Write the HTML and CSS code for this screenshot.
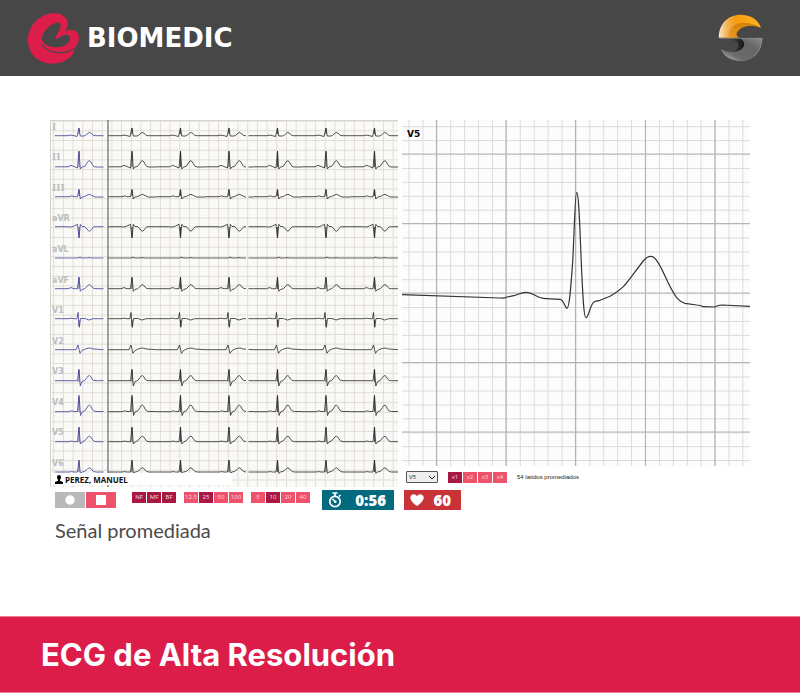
FILE: index.html
```html
<!DOCTYPE html>
<html lang="es">
<head>
<meta charset="utf-8">
<meta name="viewport" content="width=device-width, initial-scale=1">
<title>Biomedic</title>
<link rel="stylesheet" href="styles.css">
</head>
<body>
<header class="header">
  <div class="brand">
    <svg class="brand-mark" viewBox="84 38 152 152" aria-hidden="true">
      <path fill="#dd1e4b" fill-rule="evenodd" d="M160 39C182 36 203 52 203 70C203 79 199 86 193 94C206 86 228 86 234 102C239 115 233 130 224 143C221 168 193 189 157 189C114 189 84 160 84 120C84 75 117 42 160 39ZM168 67C145 74 122 100 126 118C130 132 145 139 165 140C184 141 204 134 209 118C212 108 206 101 196 103C185 105 174 114 165 117C167 105 176 95 180 82C184 72 178 64 168 67Z"/>
      <path fill="none" stroke="#474747" stroke-width="3.500" d="M125 132C146 161 196 164 227 141"/>
    </svg>
    <span class="brand-name">BIOMEDIC</span>
  </div>
  <svg class="partner-mark" viewBox="52 40 136 146" aria-hidden="true">
    <defs>
      <linearGradient id="gold" x1="0" y1="0" x2="1" y2="0">
        <stop offset="0" stop-color="#fbe6c8"/><stop offset=".2" stop-color="#f3b157"/>
        <stop offset=".4" stop-color="#f59c10"/><stop offset="1" stop-color="#ffb31f"/>
      </linearGradient>
      <linearGradient id="goldShade" x1="0" y1="1" x2="1" y2="0">
        <stop offset="0" stop-color="#e99214"/><stop offset="1" stop-color="#945000"/>
      </linearGradient>
      <linearGradient id="steel" x1="0" y1="1" x2="1" y2="0">
        <stop offset="0" stop-color="#d0d0d0"/><stop offset=".3" stop-color="#6a6a6a"/>
        <stop offset=".7" stop-color="#666"/><stop offset="1" stop-color="#8c8c8c"/>
      </linearGradient>
      <linearGradient id="steelShade" x1="0" y1="0" x2="1" y2="0">
        <stop offset="0" stop-color="#555"/><stop offset="1" stop-color="#161616"/>
      </linearGradient>
    </defs>
    <path fill="url(#gold)" d="M54 112C54 70 82 42 120 42C151 42 175 58 182 82C158 72 131 74 117 87C105 97 104 106 116 112Z"/>
    <path fill="url(#goldShade)" d="M84 112C78 82 108 60 146 68Q168 72 182 82C158 72 131 74 117 87C105 97 104 106 116 112Z" opacity=".5"/>
    <path fill="url(#steel)" d="M116 114H186C185 155 160 184 124 184C92 184 67 168 60 146C84 160 111 158 125 145C136 134 132 121 116 114Z"/>
    <path fill="url(#steelShade)" d="M76 114H116C132 121 136 134 125 145C119 151 108 155 98 155C119 145 121 125 96 120Q86 118 76 114Z"/>
    <path fill="none" stroke="#a8a8a8" stroke-width="1.500" d="M56 114H186C184 138 176 156 162 168"/>
  </svg>
</header>

<main class="content">
  <section class="monitor" aria-label="Registro de ECG">
    <div class="strip">
      <svg class="chart" viewBox="0 0 348 367" role="img" aria-label="Doce derivaciones">
        <defs>
          <pattern id="fine" width="1.94" height="1.94" patternUnits="userSpaceOnUse">
            <path d="M0 0H2M0 0V2" stroke="#f3f2ef" stroke-width=".8"/>
          </pattern>
          <pattern id="paper" x="3.2" y="0.6" width="9.7" height="9.7" patternUnits="userSpaceOnUse">
            <path d="M0 .5H9.7M.5 0V9.7" stroke="#ded7cc" stroke-width=".8"/>
          </pattern>
          <clipPath id="sweep"><path d="M58 0H196V367H58ZM198.500 0H348V367H198.500Z"/></clipPath>
          <!-- One heartbeat for all leads, centred on the R wave -->
          <g id="beat" fill="none" stroke-linejoin="round" stroke-width=".8">
            <path d="M-24 15.700H-11Q-8 14.500 -5 15.700L-2 16.500 0 8 1.200 16H5Q7 15.500 8 14Q10 11 12.500 13.500Q14 16 16 15.700H24.500"/>
            <path d="M-24 46.800H-11Q-8 44 -5 46.500L-1.500 48 0 31 1.300 49 3 47Q6 47.500 8 43Q10.500 38 13 44Q14.500 47.500 17 47H24.500"/>
            <path d="M-24 76.700H-10Q-7 75 -5 76.700H-1.500L0 69.300 1.300 79 3 77Q6 77 8 75.200Q10.500 73.300 13 75.500L16 77H24.500"/>
            <path d="M-24 106.700H-12Q-8 107.800 -5 106L-1.500 104.300 0 118 1.300 104.300 3 106.500Q6 105.500 8 109Q10.500 113.500 13 108.500Q14.500 106 17 106.700H24.500"/>
            <path stroke-width="1.200" stroke-opacity=".7" d="M-24 138H-1L1 137.200 3 138H8L10 137.500 12 138H24.500"/>
            <path d="M-24 168.700H-11Q-8 166.500 -5 168.700H-1.500L0 157 1.300 171.300 3 169.500Q6 169.500 8 166.500Q10.500 162.500 13 167Q14.500 169 17 168.700H24.500"/>
            <path d="M-24 198.700H-11L-8 198.200 -5 198.700H-2L-1 192.500 .3 207.300 1.500 198.500H6Q10 201.500 14 198.700H24.500"/>
            <path d="M-24 229.700H-3L-1 225 1 233.300 3 230.500Q10 226.500 14 229L24.500 229.700"/>
            <path d="M-24 260.700H-1.500L0 249.300 1.300 266 3 261.500Q6 261.500 8 257.500Q10.500 253 13 259Q14.500 261 17 260.700H24.500"/>
            <path d="M-24 291.700H-10Q-7 290 -5 291.500H-1.500L0 275.300 1.500 295.500 3 292Q6 292 8 287.500Q10.500 282 13 289Q14.500 291.700 17 291.500H24.500"/>
            <path d="M-24 321.700H-10Q-7 320.500 -5 321.700H-1.500L0 307 1.300 324 3 322Q6 321.500 8 318Q10.500 314 13 319Q14.500 322 17 321.700H24.500"/>
            <path d="M-24 352H-10Q-7 351.200 -5 352H-1.500L0 340 1.300 353.300 3 352Q6 352 8 349.500Q10.500 346 13 350Q14.500 352 17 352H24.500"/>
            <path stroke-width=".8" d="M0 8.500V14M0 32V47M0 70V76M0 107V117M0 158V169M0 200V206M0 250V262M0 277V292M0 308V322M0 341V352"/>
          </g>
        </defs>
        <rect width="348" height="367" fill="#fdfdfc"/>
        <rect width="348" height="367" fill="url(#fine)"/>
        <rect width="348" height="367" fill="url(#paper)"/>
        <path d="M0 .5H348M.5 0V367" stroke="#d6d3ce"/>
        <g class="lead-label">
          <text class="roman" x="2" y="10">I</text>
          <text class="roman" x="2" y="40">II</text>
          <text class="roman" x="2" y="71">III</text>
          <text x="2" y="101">aVR</text>
          <text x="2" y="132">aVL</text>
          <text x="2" y="163">aVF</text>
          <text x="2" y="193">V1</text>
          <text x="2" y="224">V2</text>
          <text x="2" y="254">V3</text>
          <text x="2" y="285">V4</text>
          <text x="2" y="315">V5</text>
          <text x="2" y="346">V6</text>
        </g>
        <use href="#beat" x="29" stroke="#3c3c93"/>
        <g stroke="#262626" clip-path="url(#sweep)">
          <use href="#beat" x="82"/>
          <use href="#beat" x="130.500"/>
          <use href="#beat" x="179"/>
          <use href="#beat" x="227.500"/>
          <use href="#beat" x="276"/>
          <use href="#beat" x="324.500"/>
        </g>
        <path d="M58 0V367" stroke="#666" stroke-width="1.200"/>
      </svg>
      <div class="patient">
        <svg class="patient-icon" viewBox="0 0 8 9" aria-hidden="true"><path d="M4 0C5.500 0 6.200 1 6 2.500Q5.800 4 5 4.800V5.800L8 7V9H0V7L3 5.800V4.800Q2.200 4 2 2.500C1.800 1 2.500 0 4 0Z"/></svg>
        PEREZ, MANUEL
      </div>
    </div>

    <div class="average">
      <svg class="chart" viewBox="0 0 348 346" role="img" aria-label="Latido promediado V5">
        <defs>
          <pattern id="minor" x="6.500" y="6.200" width="13.910" height="13.910" patternUnits="userSpaceOnUse">
            <path d="M2.800 0V14M5.600 0V14M8.400 0V14M11.200 0V14M0 2.800H14M0 5.600H14M0 8.400H14M0 11.200H14" stroke="#fafafa" stroke-width=".8"/>
            <path d="M0 .5H14M.5 0V14" stroke="#dadada"/>
          </pattern>
        </defs>
        <rect width="348" height="346" fill="#fff"/>
        <rect width="348" height="346" fill="url(#minor)"/>
        <path fill="none" stroke="#b4b4b4" stroke-width="1.200" d="M34.500 0V346M104 0V346M173.500 0V346M243.500 0V346M313 0V346M0 34H348M0 103.500H348M0 173H348M0 242.500H348M0 312H348"/>
        <text class="trace-label" x="5" y="17">V5</text>
        <path fill="none" stroke="#333" stroke-width="1.200" stroke-linejoin="round" d="M0 174.700L98 178Q102 178.500 105 177L113 175.300C117 174 120 172.300 124 172.300S130 174 133 175.300Q139 178.700 144 178.700L158 179.300C162 179.500 163 188.300 165 188.300C167.500 188.300 169 165 170.700 141.700C172.500 108 173 72.300 174.700 72.300C177 72.300 178 115 179.700 151.700C181 180 182 197.700 184 197.700C187 197.700 188 183 193 181.300L198 180.300L208 176.300Q216 172 221.300 166.700C228 159.500 234 150 241.300 141Q247 134 252 137.500C260 144 264 163 274.700 177.700Q279 182.500 283 183.300L294.700 185Q298 185 301.300 186.700L313 187Q316 185 320 185L348 186.300"/>
      </svg>
      <div class="average-controls">
        <select class="lead-select" aria-label="Derivación"><option>V5</option></select>
        <div class="options">
          <button type="button" class="option selected">x1</button>
          <button type="button" class="option">x2</button>
          <button type="button" class="option">x3</button>
          <button type="button" class="option">x4</button>
        </div>
        <span class="beats">54 latidos promediados</span>
      </div>
    </div>
  </section>

  <div class="toolbar">
    <div class="recorder">
      <button type="button" class="record" aria-label="Grabar"><svg viewBox="0 0 10 10" width="10" height="10"><circle cx="5" cy="5" r="4.700" fill="#fff"/></svg></button>
      <button type="button" class="stop" aria-label="Detener"><svg viewBox="0 0 10 10" width="10" height="10"><path d="M0 0H10V10H0Z" fill="#fff"/></svg></button>
    </div>
    <div class="option-groups">
      <div class="options">
        <button type="button" class="option selected">NF</button>
        <button type="button" class="option selected">MF</button>
        <button type="button" class="option selected">BF</button>
      </div>
      <div class="options">
        <button type="button" class="option">12.5</button>
        <button type="button" class="option selected">25</button>
        <button type="button" class="option">50</button>
        <button type="button" class="option">100</button>
      </div>
      <div class="options">
        <button type="button" class="option">5</button>
        <button type="button" class="option selected">10</button>
        <button type="button" class="option">20</button>
        <button type="button" class="option">40</button>
      </div>
    </div>
    <div class="readouts">
      <div class="readout timer">
        <svg viewBox="0 0 14 16" width="14" height="16" aria-hidden="true"><g fill="none" stroke="#fff" stroke-width="1.700"><circle cx="7" cy="9.500" r="5.200"/><path d="M4.500 1H9.500M7 1V4M11 4.500L12.500 3M7.500 10L4.500 7"/></g><circle cx="7.300" cy="9.800" r="1.300" fill="#fff"/></svg>
        <span>0:56</span>
      </div>
      <div class="readout pulse">
        <svg viewBox="0 0 14 12" width="14" height="12" aria-hidden="true"><path fill="#fff" d="M7 12C3 9 .3 6.500 .3 3.700C.3 1.500 2 .2 3.700 .2C5.200 .2 6.300 1 7 2.200C7.700 1 8.800 .2 10.300 .2C12 .2 13.700 1.500 13.700 3.700C13.700 6.500 11 9 7 12Z"/></svg>
        <span>60</span>
      </div>
    </div>
  </div>
  <p class="caption">Señal promediada</p>
</main>

<footer class="footer">
  <h1 class="title">ECG de Alta Resolución</h1>
</footer>
</body>
</html>
```
FILE: styles.css
```css
* {
  box-sizing: border-box;
}

body {
  margin: 0;
  min-height: 100vh;
  display: flex;
  flex-direction: column;
  background: #fff;
  font-family: "Open Sans", "Noto Sans", sans-serif;
}

button {
  border: 0;
  padding: 0;
  font-family: inherit;
}

.header {
  display: flex;
  align-items: center;
  justify-content: space-between;
  height: 76px;
  padding: 0 37px 0 28px;
  background: #474747;
}

.brand {
  display: flex;
  align-items: center;
  gap: 8px;
}

.brand-mark {
  width: 51px;
  height: 51px;
}

.brand-name {
  color: #fff;
  font: bold 26px/32px "DejaVu Sans", sans-serif;
}

.partner-mark {
  width: 45px;
  height: 48px;
}

.content {
  padding: 44px 50px 24px;
}

.monitor {
  display: grid;
  grid-template-columns: 1fr 1fr;
  gap: 4px;
}

.strip {
  position: relative;
}

.chart {
  display: block;
  width: 100%;
}

.lead-label {
  fill: #bdbdbd;
  font: bold 8px "DejaVu Sans", sans-serif;
}

.roman {
  font-family: "DejaVu Serif", serif;
  font-size: 9px;
}

.trace-label {
  font: bold 9px "DejaVu Sans", sans-serif;
}

.patient {
  position: absolute;
  left: 1px;
  bottom: 2px;
  display: flex;
  align-items: center;
  gap: 2px;
  width: 52%;
  height: 12px;
  padding-left: 4px;
  background: #fff;
  color: #111;
  font-size: 8px;
  font-weight: 700;
}

.patient-icon {
  width: 8px;
  height: 9px;
}

.average-controls {
  display: flex;
  align-items: center;
  gap: 10px;
  padding: 5px 0 0 4px;
}

.lead-select {
  appearance: none;
  width: 32px;
  height: 12px;
  padding: 0 2px;
  border: 1px solid #555;
  border-radius: 1px;
  background: #efefef url("data:image/svg+xml,%3Csvg xmlns='http://www.w3.org/2000/svg' viewBox='0 0 8 5'%3E%3Cpath d='M1 1l3 3 3-3' fill='none' stroke='%23222'/%3E%3C/svg%3E") no-repeat right 1px center / 8px 5px;
  color: #222;
  font: 6px/10px "Open Sans", sans-serif;
}

.options {
  display: flex;
  gap: 1px;
}

.option {
  width: 14px;
  height: 11px;
  background: #ee536b;
  color: #fbdbe0;
  font-size: 6px;
  line-height: 11px;
  text-align: center;
}

.selected {
  background: #a91843;
}

.beats {
  color: #222;
  font: 6px/12px "Liberation Sans", sans-serif;
}

.toolbar {
  display: flex;
  align-items: flex-start;
  gap: 12px;
  padding: 3px 0 0 5px;
}

.recorder {
  display: flex;
  gap: 1px;
  padding: 2px 4px 0 0;
}

.record,
.stop {
  display: grid;
  place-items: center;
  width: 30px;
  height: 16px;
  background: #b9b9b9;
}

.stop {
  background: #ee536b;
}

.option-groups {
  display: flex;
  gap: 8px;
  padding-top: 2px;
}

.readouts {
  display: flex;
  gap: 10px;
}

.readout {
  display: flex;
  align-items: center;
  justify-content: space-between;
  height: 20px;
  color: #fff;
  font-size: 15px;
  font-weight: 800;
  line-height: 20px;
}

.timer {
  width: 72px;
  padding: 0 8px 0 6px;
  background: #046a7e;
}

.pulse {
  width: 57px;
  padding: 0 10px 0 6px;
  background: #c93237;
}

.caption {
  margin: 8px 5px 0;
  color: #4b4b4b;
  font: 20px/24px Lato, sans-serif;
}

.footer {
  margin-top: auto;
  padding: 20px 41px 19px;
  border-top: 1px solid #e87c96;
  border-bottom: 1px solid #e87c96;
  background: #dc1d4a;
}

.title {
  margin: 0;
  color: #fff;
  font: bold 31px/36px Inter, sans-serif;
}
```
